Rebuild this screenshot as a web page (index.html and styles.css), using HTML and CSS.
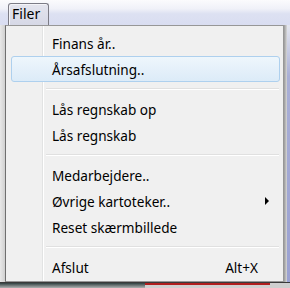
FILE: index.html
```html
<!DOCTYPE html>
<html lang="da">
<head>
  <meta charset="UTF-8" />
  <title>Filer</title>
  <link rel="stylesheet" href="styles.css">
</head>
<body>
  <div class="menubar">
    <span class="menu-title">Filer</span>
  </div>

  <div class="workspace">
    <div class="left-edge"></div>

    <div class="dropdown">
      <div class="item">Finans år..</div>
      <div class="item active">Årsafslutning..</div>
      <div class="separator"></div>
      <div class="item">Lås regnskab op</div>
      <div class="item">Lås regnskab</div>
      <div class="separator"></div>
      <div class="item">Medarbejdere..</div>
      <div class="item">Øvrige kartoteker.. <span class="arrow"></span></div>
      <div class="item">Reset skærmbillede</div>
      <div class="separator"></div>
      <div class="item">Afslut <span class="shortcut">Alt+X</span></div>
    </div>

    <div class="right-edge">
      <div class="shadow"></div>
      <div class="app-strip"></div>
    </div>
  </div>

  <div class="statusbar">
    <span class="status-dark"></span>
    <span class="status-red"></span>
  </div>
</body>
</html>
```

FILE: styles.css
```css
:root {
  --menu-bg: #f0f0f0;
  --menu-border: #979797;
  --text: #000000;
  --hover-border: #aed0ee;
}

body {
  margin: 0;
  width: 290px;
  height: 288px;
  overflow: hidden;
  background: #f0f0f0;
  font-family: 'Noto Sans', 'Open Sans', sans-serif;
  font-size: 13.6px;
  color: var(--text);
}

.menubar {
  height: 25px;
  box-sizing: border-box;
  padding: 3px 0 0 8px;
  background: linear-gradient(to bottom, #fbfbfd 0%, #f0f1f8 35%, #dde1f2 55%, #d9ddf1 100%);
}

.menu-title {
  display: inline-block;
  box-sizing: border-box;
  height: 22px;
  width: 41px;
  padding: 1px 0 0 3px;
  border: 1px solid #7c7c86;
  border-bottom: none;
  border-radius: 3px 3px 0 0;
  background: linear-gradient(to bottom, #e4e5ee, #d6d8e6);
  box-shadow: inset 1px 1px 0 #f4f4f8;
  font-size: 14px;
  line-height: 18px;
}

.workspace {
  display: flex;
  height: 257px;
}

.left-edge {
  width: 5px;
  background: linear-gradient(to right, #e8e8e8, #d0d0d0);
}

.dropdown {
  width: 279px;
  box-sizing: border-box;
  border: 1px solid var(--menu-border);
  border-left-color: #6f6f6f;
  background: var(--menu-bg);
  padding: 4px 2px 1px 2px;
  position: relative;
}

/* icon column line */
.dropdown::before {
  content: '';
  position: absolute;
  top: 0;
  bottom: 0;
  left: 36px;
  width: 1px;
  background: #e2e3e3;
  box-shadow: 1px 0 0 #ffffff;
}

.item {
  height: 26px;
  box-sizing: border-box;
  margin: 0 1px 0 3px;
  padding-left: 40px;
  padding-right: 20px;
  display: flex;
  align-items: center;
  border: 1px solid transparent;
  border-radius: 3px;
  position: relative;
  white-space: nowrap;
}

.item.active {
  border-color: var(--hover-border);
  background: linear-gradient(to bottom, #eef6fc, #dcebf8);
}

.separator {
  height: 14px;
  position: relative;
}

.separator::after {
  content: '';
  position: absolute;
  left: 38px;
  right: 2px;
  top: 6px;
  height: 1px;
  background: #e0e0e0;
  box-shadow: 0 1px 0 #ffffff;
}

.arrow {
  margin-left: auto;
  margin-right: -10px;
  width: 0;
  height: 0;
  border-top: 4px solid transparent;
  border-bottom: 4px solid transparent;
  border-left: 4px solid #000000;
}

.shortcut {
  margin-left: auto;
  margin-right: 1px;
}

.right-edge {
  flex: 1;
  display: flex;
}

.shadow {
  width: 3px;
  background: linear-gradient(to right, #9a9a9a, #d8d8d8);
}

.app-strip {
  flex: 1;
  background: linear-gradient(to bottom, #e4e6ee 0%, #a9afd6 20%, #9aa1d2 100%);
}

.statusbar {
  height: 6px;
  display: flex;
  background: #cfcfcf;
  border-top: 1px solid #3a3a3a;
}

.status-dark {
  width: 145px;
  background: linear-gradient(to bottom, #2f3f3f, #c8c8c8);
}

.status-red {
  width: 125px;
  height: 2px;
  background: #b01e1e;
}
```
